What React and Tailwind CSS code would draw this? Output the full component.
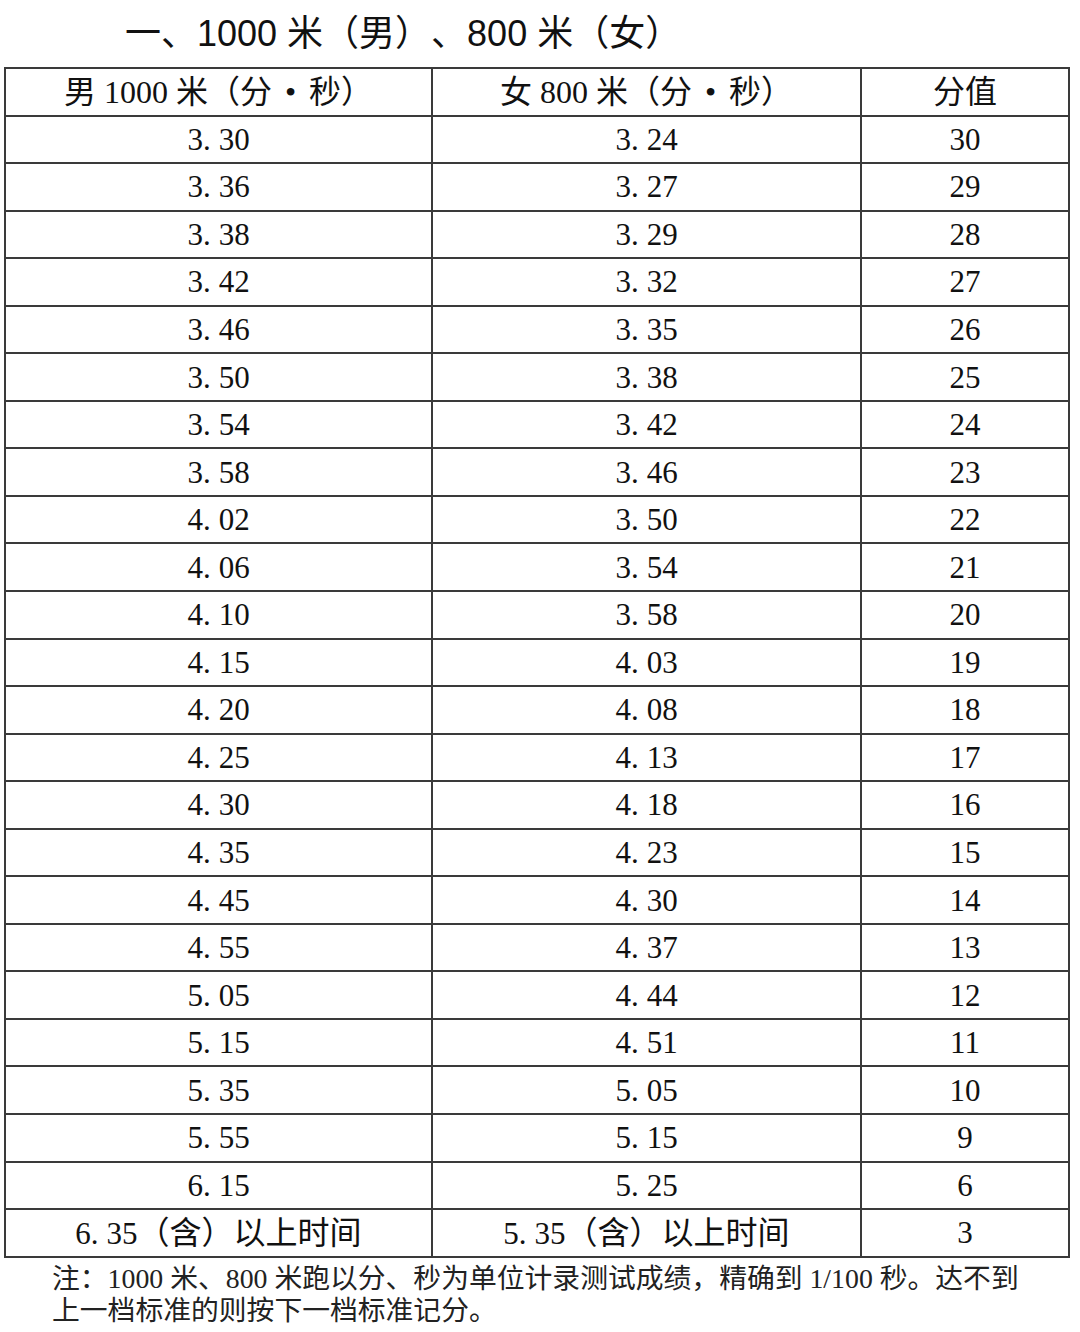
import React from "react";

const rows = [
  ["3.30", "3.24", "30"],
  ["3.36", "3.27", "29"],
  ["3.38", "3.29", "28"],
  ["3.42", "3.32", "27"],
  ["3.46", "3.35", "26"],
  ["3.50", "3.38", "25"],
  ["3.54", "3.42", "24"],
  ["3.58", "3.46", "23"],
  ["4.02", "3.50", "22"],
  ["4.06", "3.54", "21"],
  ["4.10", "3.58", "20"],
  ["4.15", "4.03", "19"],
  ["4.20", "4.08", "18"],
  ["4.25", "4.13", "17"],
  ["4.30", "4.18", "16"],
  ["4.35", "4.23", "15"],
  ["4.45", "4.30", "14"],
  ["4.55", "4.37", "13"],
  ["5.05", "4.44", "12"],
  ["5.15", "4.51", "11"],
  ["5.35", "5.05", "10"],
  ["5.55", "5.15", "9"],
  ["6.15", "5.25", "6"],
];

function Num({ v }) {
  const [a, b] = v.split(".");
  return (
    <span>
      {a}
      <span className="mr-[8px]">.</span>
      {b}
    </span>
  );
}

const serif = { fontFamily: '"Liberation Serif", "Noto Sans CJK SC", serif' };

function Cell({ children, last }) {
  return (
    <div
      className={
        "h-[47.56px] flex items-center justify-center border-b-2 border-[#3a3a3a] " +
        (last ? "" : "border-r-2")
      }
    >
      {children}
    </div>
  );
}

function Bullet() {
  return <span className="mx-[13px]">•</span>;
}

export default function App() {
  return (
    <div className="w-[1080px] h-[1332px] bg-white text-[#111] overflow-hidden [text-spacing-trim:space-all]">
      <div
        className="h-[67px] pl-[125px] flex items-center text-[36px] leading-none font-normal"
        style={{ fontFamily: '"Liberation Sans", "Noto Sans CJK SC", sans-serif' }}
      >
        一、1000 米（男）、800 米（女）
      </div>
      <div
        className="ml-[4px] w-[1066px] border-2 border-b-0 border-[#3a3a3a] grid grid-cols-[427px_429px_1fr] text-[31px] leading-none"
        style={serif}
      >
        <Cell>
          <span className="text-[32px]">
            男 1000 米（分<Bullet />秒）
          </span>
        </Cell>
        <Cell>
          <span className="text-[32px]">
            女 800 米（分<Bullet />秒）
          </span>
        </Cell>
        <Cell last>
          <span className="text-[32px]">分值</span>
        </Cell>
        {rows.map((r, i) => (
          <React.Fragment key={i}>
            <Cell>
              <Num v={r[0]} />
            </Cell>
            <Cell>
              <Num v={r[1]} />
            </Cell>
            <Cell last>{r[2]}</Cell>
          </React.Fragment>
        ))}
        <Cell>
          <span>
            <Num v="6.35" />
            <span className="text-[32px]">（含）以上时间</span>
          </span>
        </Cell>
        <Cell>
          <span>
            <Num v="5.35" />
            <span className="text-[32px]">（含）以上时间</span>
          </span>
        </Cell>
        <Cell last>3</Cell>
      </div>
      <div className="pl-[52px] pt-[5px] text-[27.8px] leading-[32px] text-[#222]" style={serif}>
        <div className="whitespace-nowrap">注：1000 米、800 米跑以分、秒为单位计录测试成绩，精确到 1/100 秒。达不到</div>
        <div>上一档标准的则按下一档标准记分。</div>
      </div>
    </div>
  );
}
